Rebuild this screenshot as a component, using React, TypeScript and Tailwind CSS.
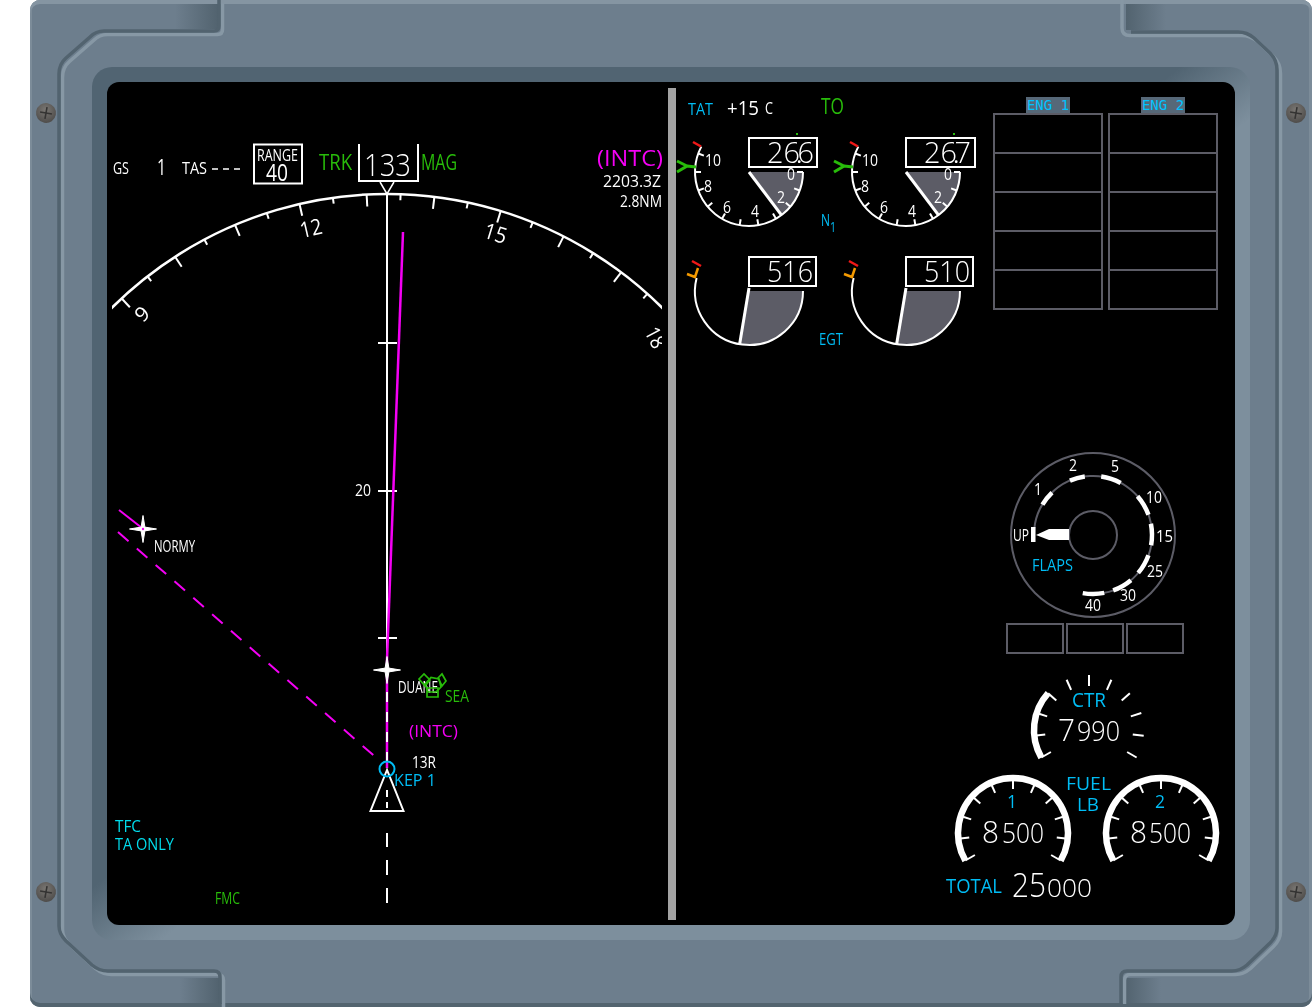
import React from 'react';

const WHITE = '#ffffff';
const CYAN = '#00bdf5';
const GREEN = '#28bc0a';
const MAGENTA = '#f400f4';
const GREY = '#5c5c66';

function pt(cx: number, cy: number, r: number, deg: number) {
  const a = (deg * Math.PI) / 180;
  return [cx + r * Math.sin(a), cy - r * Math.cos(a)];
}

function arc(cx: number, cy: number, r: number, from: number, to: number) {
  const [x0, y0] = pt(cx, cy, r, from);
  const [x1, y1] = pt(cx, cy, r, to);
  const large = Math.abs(to - from) > 180 ? 1 : 0;
  return `M${x0} ${y0}A${r} ${r} 0 ${large} 1 ${x1} ${y1}`;
}

function Tick({ cx, cy, r0, r1, deg, w = 2, c = WHITE }: { cx: number; cy: number; r0: number; r1: number; deg: number; w?: number; c?: string }) {
  const [x0, y0] = pt(cx, cy, r0, deg);
  const [x1, y1] = pt(cx, cy, r1, deg);
  return <line x1={x0} y1={y0} x2={x1} y2={y1} stroke={c} strokeWidth={w} />;
}

// x is the left edge, w the width the text must fill, y the baseline
function T({ x, y, w, s, c = WHITE, r, children }: { x: number; y: number; w: number; s: number; c?: string; r?: number; children: React.ReactNode }) {
  const mid = x + w / 2;
  const small = s <= 16;
  const size = small ? s + 1 : s;
  const base = small ? y - 1 : y;
  return (
    <text
      x={mid}
      y={base}
      fontSize={size}
      fontWeight={s >= 24 ? 350 : 400}
      fill={c}
      textAnchor="middle"
      textLength={w}
      lengthAdjust="spacingAndGlyphs"
      transform={r ? `rotate(${r} ${mid} ${base - size * 0.36})` : undefined}
    >
      {children}
    </text>
  );
}

function Star({ x, y, r }: { x: number; y: number; r: number }) {
  const k = r * 0.14;
  return (
    <path
      d={`M${x} ${y - r}L${x + k} ${y - k}L${x + r} ${y}L${x + k} ${y + k}L${x} ${y + r}L${x - k} ${y + k}L${x - r} ${y}L${x - k} ${y - k}Z`}
      fill={WHITE}
      stroke={WHITE}
      strokeWidth="1"
    />
  );
}

function Screw({ x, y, rot }: { x: number; y: number; rot: number }) {
  return (
    <g transform={`rotate(${rot} ${x} ${y})`}>
      <circle cx={x} cy={y} r="10" fill="url(#screw)" />
      <path d={`M${x - 6} ${y}H${x + 6}M${x} ${y - 6}V${y + 6}`} stroke="#353433" strokeWidth="1.6" />
    </g>
  );
}

function Bezel() {
  const left = 'M219 0V26Q219 31 214 31H104Q96 31 90 37L66 58Q59 64 59 74V926Q59 934 66 941L92 965Q99 971 108 971H214Q220 971 220 977V1004';
  const rightDark = 'M1131 32H1238Q1247 32 1254 38L1270 53Q1277 60 1277 70V928Q1277 936 1270 943L1247 965Q1240 971 1232 971H1127Q1121 971 1121 977V1004';
  const rightLight = 'M1122 0V28Q1122 35.5 1130 35.5H1241.5Q1250.5 35.5 1257.5 41.5L1273.5 56.5Q1280.5 63.5 1280.5 73.5V931.5Q1280.5 939.5 1273.5 946.5L1250.5 968.5Q1243.5 974.5 1235.5 974.5H1130.5Q1124.5 974.5 1124.5 980.5V1004';
  return (
    <svg className="absolute inset-0 pointer-events-none" width="1282" height="1007" viewBox="30 0 1282 1007">
      <defs>
        <linearGradient id="toR">
          <stop offset="0" stopColor="#52636f" stopOpacity="0" />
          <stop offset="1" stopColor="#52636f" />
        </linearGradient>
        <linearGradient id="toL">
          <stop offset="0" stopColor="#52636f" />
          <stop offset="1" stopColor="#52636f" stopOpacity="0" />
        </linearGradient>
        <radialGradient id="screw" cx="0.45" cy="0.35" r="0.7">
          <stop offset="0" stopColor="#7a7773" />
          <stop offset="1" stopColor="#4b4947" />
        </radialGradient>
      </defs>
      <rect x="175" y="4" width="43" height="25" fill="url(#toR)" />
      <rect x="1126" y="4" width="40" height="26" fill="url(#toL)" />
      <rect x="180" y="978" width="39" height="25" fill="url(#toR)" />
      <rect x="1125" y="978" width="36" height="25" fill="url(#toL)" />
      <g fill="none" strokeWidth="3.5">
        <path d={left} stroke="#8798a5" transform="translate(3.5 3.5)" />
        <path d={rightLight} stroke="#8798a5" />
        <path d={left} stroke="#52636f" />
        <path d={rightDark} stroke="#52636f" />
      </g>
      <Screw x={46} y={113} rot={10} />
      <Screw x={1296} y={113} rot={10} />
      <Screw x={46} y={892} rot={10} />
      <Screw x={1296} y={892} rot={10} />
    </svg>
  );
}

function NavDisplay() {
  const cx = 387;
  const cy = 583;
  const R = 389;
  const ticks: number[] = [];
  for (let d = -53; d <= 57; d += 5) ticks.push(d);
  return (
    <svg className="block shrink-0 will-change-transform" width="561" height="842" viewBox="107 82 561 842">
      <defs>
        <clipPath id="ndClip">
          <rect x="112" y="82" width="550" height="842" />
        </clipPath>
      </defs>
      <g clipPath="url(#ndClip)">
        <path d={arc(cx, cy, R, -60, 60)} fill="none" stroke={WHITE} strokeWidth="2.5" />
        {ticks.map((d) => (
          <Tick key={d} cx={cx} cy={cy} r0={R} r1={(d + 3) % 10 === 0 ? R - 12 : R - 6} deg={d} />
        ))}
        <T x={645} y={345} w={21} s={21} r={62}>18</T>
      </g>
      <T x={300} y={236} w={22} s={22} r={-13}>12</T>
      <T x={484} y={241} w={23} s={22} r={17}>15</T>
      <T x={136} y={321} w={12} s={20} r={-43}>9</T>

      <T x={113} y={175} w={16} s={16}>GS</T>
      <T x={157} y={175} w={9} s={22}>1</T>
      <T x={182} y={175} w={25} s={16}>TAS</T>
      <path d="M212 169h6M223 169h6M234 169h6" stroke={WHITE} strokeWidth="1.5" />
      <rect x="254" y="144.5" width="48" height="39" fill="none" stroke={WHITE} strokeWidth="2" />
      <T x={257} y={161} w={41} s={17}>RANGE</T>
      <T x={266} y={181} w={22} s={23}>40</T>
      <T x={319} y={170} w={33} s={22} c={GREEN}>TRK</T>
      <path d="M359 144V181H418V144" fill="none" stroke={WHITE} strokeWidth="2" />
      <T x={364} y={176} w={47} s={31}>133</T>
      <T x={421} y={170} w={36} s={22} c={GREEN}>MAG</T>
      <path d="M380 182L387 194L394 182" fill="none" stroke={WHITE} strokeWidth="1.5" />
      <T x={597} y={166} w={66} s={21} c={MAGENTA}>(INTC)</T>
      <T x={603} y={188} w={58} s={16}>2203.3Z</T>
      <T x={620} y={208} w={42} s={16}>2.8NM</T>

      <line x1={cx} y1="194" x2={cx} y2="662" stroke={WHITE} strokeWidth="2" />
      <path d="M378 343h19M378 491h19M378 638h19" stroke={WHITE} strokeWidth="2" />
      <T x={355} y={497} w={16} s={15}>20</T>
      <line x1="403" y1="232" x2="387" y2="660" stroke={MAGENTA} strokeWidth="2.5" />
      <line x1={cx} y1="660" x2={cx} y2="768" stroke={MAGENTA} strokeWidth="2.5" />
      <path
        d="M387 692V702M387 712V722M387 732V742M387 752V762M387 790V797M387 802V808M387 833V847M387 860V875M387 888V903"
        stroke={WHITE}
        strokeWidth="2"
      />
      <Star x={cx} y={670} r={13.5} />

      <line x1="119" y1="510" x2="142" y2="528" stroke={MAGENTA} strokeWidth="2" />
      <line x1="118" y1="532" x2="380" y2="761" stroke={MAGENTA} strokeWidth="2" strokeDasharray="14 11" />
      <Star x={143} y={529} r={13.5} />
      <circle cx="143" cy="529" r="1.2" fill={MAGENTA} />
      <T x={154} y={553} w={41} s={15}>NORMY</T>

      <T x={398} y={694} w={40} s={15}>DUANE</T>
      <g fill="none" stroke={GREEN} strokeWidth="1.7">
        <path d="M425 684L431 677.5L439 679L441 687L436 692L428 692Z" />
        <path d="M419 679L424 674L430 680L425 686Z" />
        <path d="M438 678L442 674L446 681L442 686Z" />
        <path d="M427 688H438V697H427Z" />
      </g>
      <T x={445} y={703} w={24} s={15} c={GREEN}>SEA</T>
      <T x={409} y={738} w={49} s={16} c={MAGENTA}>(INTC)</T>
      <T x={412} y={769} w={24} s={15}>13R</T>
      <path d="M387 770L370.5 811H403.5Z" fill="none" stroke={WHITE} strokeWidth="2" />
      <circle cx={cx} cy="769" r="7.5" fill="none" stroke={CYAN} strokeWidth="2" />
      <T x={394} y={787} w={42} s={15} c={CYAN}>KEP 1</T>

      <T x={115} y={833} w={26} s={15} c="#00dcec">TFC</T>
      <T x={115} y={851} w={59} s={15} c="#00dcec">TA ONLY</T>
      <T x={215} y={905} w={25} s={15} c={GREEN}>FMC</T>
    </svg>
  );
}

function N1Gauge({ dx, whole, tenth }: { dx: number; whole: string; tenth: string }) {
  const cx = 749 + dx;
  const cy = 172;
  const r = 54;
  const ticks = [20, 40, 60, 80, 100, 120, 140, 160, 180, 200];
  const [nx, ny] = pt(cx, cy, r, 90 + 53);
  return (
    <g>
      <path d={`M${cx} ${cy}L${cx + r} ${cy}A${r} ${r} 0 0 1 ${nx} ${ny}Z`} fill={GREY} />
      <path d={arc(cx, cy, r, 90, 298)} fill="none" stroke={WHITE} strokeWidth="2" />
      {ticks.map((d) => (
        <Tick key={d} cx={cx} cy={cy} r0={r} r1={r - 6} deg={d + 90} />
      ))}
      <line x1={cx + r - 6} y1={cy} x2={cx + r} y2={cy} stroke={WHITE} strokeWidth="2" />
      <line x1={cx} y1={cy} x2={nx} y2={ny} stroke={WHITE} strokeWidth="3" />
      <T x={cx + 38} y={181} w={8} s={15}>0</T>
      <T x={cx + 28} y={204} w={8} s={15}>2</T>
      <T x={cx + 2} y={218} w={8} s={15}>4</T>
      <T x={cx - 26} y={214} w={8} s={15}>6</T>
      <T x={cx - 45} y={193} w={8} s={15}>8</T>
      <T x={cx - 44} y={167} w={16} s={15}>10</T>
      <path d={`M${cx - 56} 142L${cx - 48} 146.5`} stroke="#f01818" strokeWidth="2.5" />
      <path d={`M${cx - 72} 161L${cx - 62} 166L${cx - 72} 172M${cx - 62} 166L${cx - 53} 167`} fill="none" stroke={GREEN} strokeWidth="3" />
      <rect x={cx + 47} y={133} width="2" height="2" fill={GREEN} />
      <rect x={cx} y="138" width={dx ? 69 : 68} height="29" fill="#000" stroke={WHITE} strokeWidth="2" />
      <T x={cx + 18} y={163} w={47} s={30}>
        {whole}
        <tspan dx="-3" fontSize="16" fontWeight="700">.</tspan>
        <tspan dx="-4">{tenth}</tspan>
      </T>
    </g>
  );
}

function EgtGauge({ dx, value }: { dx: number; value: string }) {
  const cx = 749 + dx;
  const cy = 291;
  const r = 54;
  const [nx, ny] = pt(cx, cy, r, 190);
  return (
    <g>
      <path d={`M${cx} ${cy}L${cx + r} ${cy}A${r} ${r} 0 0 1 ${nx} ${ny}Z`} fill={GREY} />
      <path d={arc(cx, cy, r, 90, 284)} fill="none" stroke={WHITE} strokeWidth="2" />
      <line x1={cx} y1={cy - 3} x2={nx} y2={ny} stroke={WHITE} strokeWidth="3" />
      <path d={`M${cx - 62} 274L${cx - 54} 277L${cx - 51} 268`} fill="none" stroke="#f59a00" strokeWidth="2.5" />
      <path d={`M${cx - 57} 261L${cx - 48} 266`} stroke="#f01818" strokeWidth="2.5" />
      <rect x={cx} y="257" width="67" height="29" fill="#000" stroke={WHITE} strokeWidth="2" />
      <T x={cx + 18} y={282} w={46} s={30}>{value}</T>
    </g>
  );
}

function EngineGauges() {
  return (
    <svg className="block shrink-0 will-change-transform" width="316" height="270" viewBox="676 82 316 270">
      <T x={688} y={115} w={25} s={17} c={CYAN}>TAT</T>
      <T x={727} y={115} w={32} s={20}>+15</T>
      <T x={765} y={115} w={8} s={16}>C</T>
      <T x={821} y={114} w={23} s={21} c={GREEN}>TO</T>
      <N1Gauge dx={0} whole="26" tenth="6" />
      <N1Gauge dx={157} whole="26" tenth="7" />
      <T x={821} y={227} w={9} s={16} c={CYAN}>N</T>
      <T x={830} y={233} w={6} s={14} c={CYAN}>1</T>
      <EgtGauge dx={0} value="516" />
      <EgtGauge dx={157} value="510" />
      <T x={819} y={346} w={24} s={16} c={CYAN}>EGT</T>
    </svg>
  );
}

function EngColumn({ label }: { label: string }) {
  return (
    <div className="w-[110px]">
      <div className="mx-auto h-[16px] w-[44px] bg-[#566878] text-center font-['DejaVu_Sans_Mono',monospace] text-[14px] leading-[16px] text-[#00c3ff]">
        {label}
      </div>
      {[0, 1, 2, 3, 4].map((i) => (
        <div key={i} className={`h-[41px] border-2 border-[#5c5c66] ${i ? '-mt-[2px]' : ''}`} />
      ))}
    </div>
  );
}

function Flaps() {
  const cx = 1093;
  const cy = 535;
  const segs = [[-59, -44], [-23, -8], [8, 28], [49, 70], [79, 100], [110, 130], [140, 160], [169, 190]];
  return (
    <svg className="ml-[329px] mt-[96px] block will-change-transform" width="180" height="175" viewBox="1005 448 180 175">
      <circle cx={cx} cy={cy} r="82" fill="none" stroke={GREY} strokeWidth="2" />
      <circle cx={cx} cy={cy} r="24" fill="none" stroke={GREY} strokeWidth="2" />
      <path d={arc(cx, cy, 59, -90, 170)} fill="none" stroke={GREY} strokeWidth="2" />
      {segs.map(([a, b]) => (
        <path key={a} d={arc(cx, cy, 59, a, b)} fill="none" stroke={WHITE} strokeWidth="4.5" />
      ))}
      <rect x="1031" y="527" width="4.5" height="15" fill={WHITE} />
      <path d="M1036 535L1049 529H1069V540H1049Z" fill={WHITE} />
      <T x={1013} y={542} w={16} s={15}>UP</T>
      <T x={1034} y={496} w={8} s={15}>1</T>
      <T x={1069} y={472} w={8} s={15}>2</T>
      <T x={1111} y={473} w={8} s={15}>5</T>
      <T x={1146} y={504} w={16} s={15}>10</T>
      <T x={1156} y={543} w={17} s={15}>15</T>
      <T x={1147} y={578} w={16} s={15}>25</T>
      <T x={1120} y={602} w={16} s={15}>30</T>
      <T x={1085} y={612} w={16} s={15}>40</T>
      <T x={1032} y={572} w={41} s={16} c={CYAN}>FLAPS</T>
    </svg>
  );
}

function FuelDial({ cx, cy, from, to, ticks }: { cx: number; cy: number; from: number; to: number; ticks: number[] }) {
  return (
    <g>
      <path d={arc(cx, cy, 55, from, to)} fill="none" stroke={WHITE} strokeWidth="6.5" />
      {ticks.map((d) => (
        <Tick key={d} cx={cx} cy={cy} r0={55} r1={44} deg={d} />
      ))}
    </g>
  );
}

function Fuel() {
  const all = [-120, -96, -72, -48, -24, 0, 24, 48, 72, 96, 120];
  return (
    <svg className="ml-[264px] mt-[11px] block will-change-transform" width="295" height="250" viewBox="940 665 295 250">
      <FuelDial cx={1089} cy={730} from={-120} to={-48} ticks={all} />
      <T x={1072} y={707} w={34} s={20} c={CYAN}>CTR</T>
      <T x={1058} y={741} w={17} s={31}>7</T>
      <T x={1077} y={741} w={43} s={27}>990</T>
      <FuelDial cx={1013} cy={833} from={-120} to={120} ticks={all} />
      <FuelDial cx={1161} cy={833} from={-120} to={120} ticks={all} />
      <T x={1066} y={790} w={45} s={18} c={CYAN}>FUEL</T>
      <T x={1077} y={811} w={22} s={18} c={CYAN}>LB</T>
      <T x={1007} y={808} w={10} s={18} c={CYAN}>1</T>
      <T x={1155} y={808} w={10} s={18} c={CYAN}>2</T>
      <T x={982} y={843} w={17} s={31}>8</T>
      <T x={1002} y={843} w={42} s={27}>500</T>
      <T x={1130} y={843} w={17} s={31}>8</T>
      <T x={1149} y={843} w={42} s={27}>500</T>
      <T x={946} y={893} w={56} s={20} c={CYAN}>TOTAL</T>
      <T x={1012} y={897} w={34} s={33}>25</T>
      <T x={1047} y={897} w={45} s={26}>000</T>
    </svg>
  );
}

export default function App() {
  return (
    <div className="h-[1007px] w-[1312px] overflow-hidden bg-white pl-[30px] font-['Open_Sans',sans-serif]">
      {/* Bezel */}
      <div className="relative h-full w-[1282px] rounded-[10px] bg-[#6d7e8d] pl-[62px] pt-[67px] shadow-[inset_0_4px_0_#8595a2,inset_0_-4px_0_#53646f,inset_2px_0_0_#7c8c99,inset_-3px_0_0_#7c8c99]">
        <Bezel />
        {/* Recess */}
        <div className="relative h-[873px] w-[1158px] rounded-[20px] bg-[linear-gradient(to_bottom_right,#516472_47%,#7d8f9d_53%)] p-[15px]">
          {/* Screen */}
          <div className="flex h-full overflow-hidden rounded-[12px] bg-black">
            <NavDisplay />
            <div className="mt-[6px] h-[832px] w-[8px] shrink-0 bg-[#a3a3a3]" />
            <div className="flex-1">
              <div className="flex">
                <EngineGauges />
                <div className="ml-[1px] flex gap-[5px] pt-[15px]">
                  <EngColumn label="ENG 1" />
                  <EngColumn label="ENG 2" />
                </div>
              </div>
              <Flaps />
              <div className="ml-[330px] flex gap-[2px]">
                <div className="h-[31px] w-[58px] border-2 border-[#5c5c66]" />
                <div className="h-[31px] w-[58px] border-2 border-[#5c5c66]" />
                <div className="h-[31px] w-[58px] border-2 border-[#5c5c66]" />
              </div>
              <Fuel />
            </div>
          </div>
        </div>
      </div>
    </div>
  );
}
